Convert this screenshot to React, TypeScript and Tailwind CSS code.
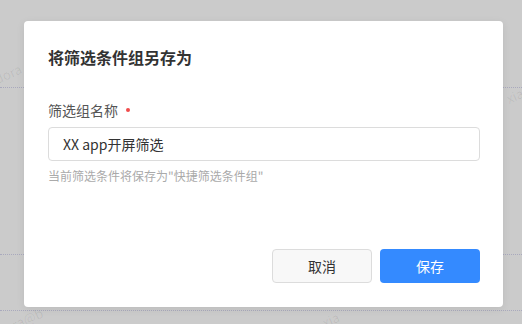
import React from 'react';

const font = { fontFamily: '"Noto Sans CJK SC", "Noto Sans", sans-serif' };

const Watermark = ({ text, className }: { text: string; className: string }) => (
  <span className={`absolute -rotate-[24deg] text-[13px] text-black/[0.07] whitespace-nowrap ${className}`}>{text}</span>
);

const App = () => {
  return (
    <div className="relative w-[522px] h-[324px] overflow-hidden bg-[#cbcbcb]" style={font}>
      {/* page behind the overlay */}
      <div className="flex flex-col">
        <div className="h-[88px] border-b border-dotted border-[#a9a9bd]" />
        <div className="h-[167px] border-b border-dotted border-[#a9a9bd]" />
        <div className="h-[56px] border-b border-dotted border-[#a9a9bd]" />
      </div>
      <Watermark text="dora" className="left-[-6px] top-[64px]" />
      <Watermark text="xia" className="left-[506px] top-[86px]" />
      <Watermark text="dora@b" className="left-[-4px] top-[312px]" />
      <Watermark text="xia" className="left-[322px] top-[310px]" />

      {/* dialog */}
      <div className="absolute left-[24px] top-[21px] w-[479px] h-[286px] bg-white rounded-[4px] flex flex-col pl-6 pr-[23px] pt-6 pb-6 shadow-[0_2px_8px_rgba(0,0,0,0.08)]">
        <h2 className="text-[16px] leading-6 font-bold text-[#333]">将筛选条件组另存为</h2>

        <div className="mt-[31px] flex items-center h-5 text-[14px] text-[#555]">
          <span>筛选组名称</span>
          <span className="ml-[8px] w-[4px] h-[4px] rounded-full bg-[#f04b4b]" />
        </div>

        <div className="mt-[7px] w-[432px] h-[34px] border border-[#dcdcdc] rounded-[4px] flex items-center pl-[14px] text-[14px] text-[#333]">
          XX app开屏筛选
        </div>

        <p className="mt-[6px] text-[12px] leading-[18px] text-[#aaa]">当前筛选条件将保存为"快捷筛选条件组"</p>

        <div className="mt-auto flex justify-end gap-2">
          <button className="w-[100px] h-[34px] rounded-[4px] border border-[#dcdcdc] bg-[#f8f8f8] text-[14px] text-[#333]">
            取消
          </button>
          <button className="w-[100px] h-[34px] rounded-[4px] bg-[#348aff] text-[14px] text-white">
            保存
          </button>
        </div>
      </div>
    </div>
  );
};

export default App;
